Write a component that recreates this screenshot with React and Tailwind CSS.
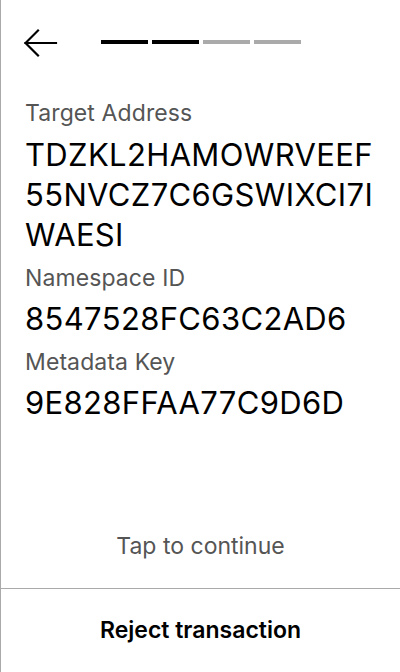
import React from "react";

function Label({ children }) {
  return <div className="text-[23px] leading-[28px] text-[#555555] tracking-[0.1px]">{children}</div>;
}
function Value({ children }) {
  return <div className="text-[31px] leading-[40px] text-black break-all tracking-[0.35px]">{children}</div>;
}

export default function App() {
  return (
    <div
      className="w-[400px] h-[672px] bg-white border-l border-[#aaaaaa] flex flex-col"
      style={{ fontFamily: "Inter, 'Noto Sans', sans-serif" }}
    >
      <div className="h-[86px] flex items-center pl-[23px]">
        <svg width="34" height="30" viewBox="0 0 34 30" fill="none" stroke="black" strokeWidth="2.2" strokeLinecap="square">
          <path d="M32 15H1.5" />
          <path d="M14 2.5L1.5 15L14 27.5" />
        </svg>
        <div className="flex gap-[4px] ml-[43px] -mt-[2px]">
          <div className="w-[47px] h-[4px] bg-black" />
          <div className="w-[47px] h-[4px] bg-black" />
          <div className="w-[47px] h-[4px] bg-[#aaaaaa]" />
          <div className="w-[47px] h-[4px] bg-[#aaaaaa]" />
        </div>
      </div>
      <div className="flex-1 px-6 pt-[13px] flex flex-col">
        <Label>Target Address</Label>
        <div className="mt-[8px]">
          <Value>TDZKL2HAMOWRVEEF55NVCZ7C6GSWIXCI7IWAESI</Value>
        </div>
        <div className="mt-[9px]">
          <Label>Namespace ID</Label>
        </div>
        <div className="mt-[7px]">
          <Value>8547528FC63C2AD6</Value>
        </div>
        <div className="mt-[9px]">
          <Label>Metadata Key</Label>
        </div>
        <div className="mt-[7px]">
          <Value>9E828FFAA77C9D6D</Value>
        </div>
      </div>
      <div className="text-center text-[23px] leading-[28px] text-[#555555] pb-[28px]">Tap to continue</div>
      <div className="h-[84px] border-t border-[#aaaaaa] flex items-center justify-center text-[23px] font-semibold text-black">
        Reject transaction
      </div>
    </div>
  );
}
